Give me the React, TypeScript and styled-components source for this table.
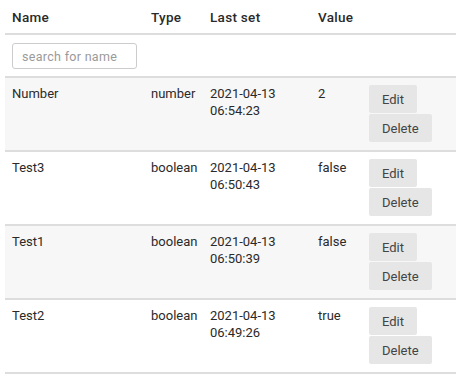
import React, { FC } from "react";
import styled, { createGlobalStyle } from "styled-components";

const GlobalStyle = createGlobalStyle`
  body {
    margin: 0;
    background: #ffffff;
    font-family: Roboto, "Liberation Sans", sans-serif;
    color: #222;
  }
`;

type Variable = {
  name: string;
  type: string;
  date: string;
  time: string;
  value: string;
};

const variables: Variable[] = [
  { name: "Number", type: "number", date: "2021-04-13", time: "06:54:23", value: "2" },
  { name: "Test3", type: "boolean", date: "2021-04-13", time: "06:50:43", value: "false" },
  { name: "Test1", type: "boolean", date: "2021-04-13", time: "06:50:39", value: "false" },
  { name: "Test2", type: "boolean", date: "2021-04-13", time: "06:49:26", value: "true" },
];

const Wrapper = styled.div`
  padding-left: 5px;
`;

const Table = styled.table`
  width: 100%;
  table-layout: fixed;
  border-collapse: collapse;
  font-size: 13px;
`;

const HeadCell = styled.th<{ width?: number }>`
  text-align: left;
  font-weight: 500;
  font-size: 13.5px;
  letter-spacing: 0.3px;
  color: #2a2a2a;
  padding: 7px 7px 6px;
  line-height: 20px;
  border-bottom: 2px solid #dddddd;
  width: ${(p) => (p.width ? `${p.width}px` : "auto")};
  box-sizing: border-box;
`;

const FilterRow = styled.tr`
  border-bottom: 2px solid #dddddd;
`;

const FilterCell = styled.td`
  padding: 8px 7px 7px;
`;

const SearchInput = styled.input`
  width: 125px;
  height: 26px;
  box-sizing: border-box;
  border: 1px solid #cccccc;
  border-radius: 3px;
  padding: 0 9px;
  font-family: Roboto, "Liberation Sans", sans-serif;
  font-size: 12.5px;
  letter-spacing: 0.3px;
  color: #333;
  outline: none;
  &::placeholder {
    color: #9a9a9a;
  }
`;

const Row = styled.tr<{ shaded: boolean }>`
  background: ${(p) => (p.shaded ? "#f7f7f7" : "#ffffff")};
  border-bottom: 2px solid #dddddd;
`;

const Cell = styled.td`
  vertical-align: top;
  padding: 7px;
  line-height: 17px;
  color: #2a2a2a;
`;

const Button = styled.button`
  display: block;
  height: 28px;
  padding: 0 13px;
  margin-bottom: 1px;
  border: none;
  border-radius: 2px;
  background: #e6e6e6;
  color: #444;
  font-family: Roboto, "Liberation Sans", sans-serif;
  font-size: 13px;
  cursor: pointer;
`;

const App: FC = () => {
  return (
    <Wrapper>
      <GlobalStyle />
      <Table>
        <thead>
          <tr>
            <HeadCell width={139}>Name</HeadCell>
            <HeadCell width={59}>Type</HeadCell>
            <HeadCell width={108}>Last set</HeadCell>
            <HeadCell width={51}>Value</HeadCell>
            <HeadCell />
          </tr>
        </thead>
        <tbody>
          <FilterRow>
            <FilterCell colSpan={5}>
              <SearchInput placeholder="search for name" />
            </FilterCell>
          </FilterRow>
          {variables.map((v, index) => (
            <Row key={v.name} shaded={index % 2 === 0}>
              <Cell>{v.name}</Cell>
              <Cell>{v.type}</Cell>
              <Cell>
                {v.date}
                <br />
                {v.time}
              </Cell>
              <Cell>{v.value}</Cell>
              <Cell>
                <Button>Edit</Button>
                <Button>Delete</Button>
              </Cell>
            </Row>
          ))}
        </tbody>
      </Table>
    </Wrapper>
  );
};

export default App;
